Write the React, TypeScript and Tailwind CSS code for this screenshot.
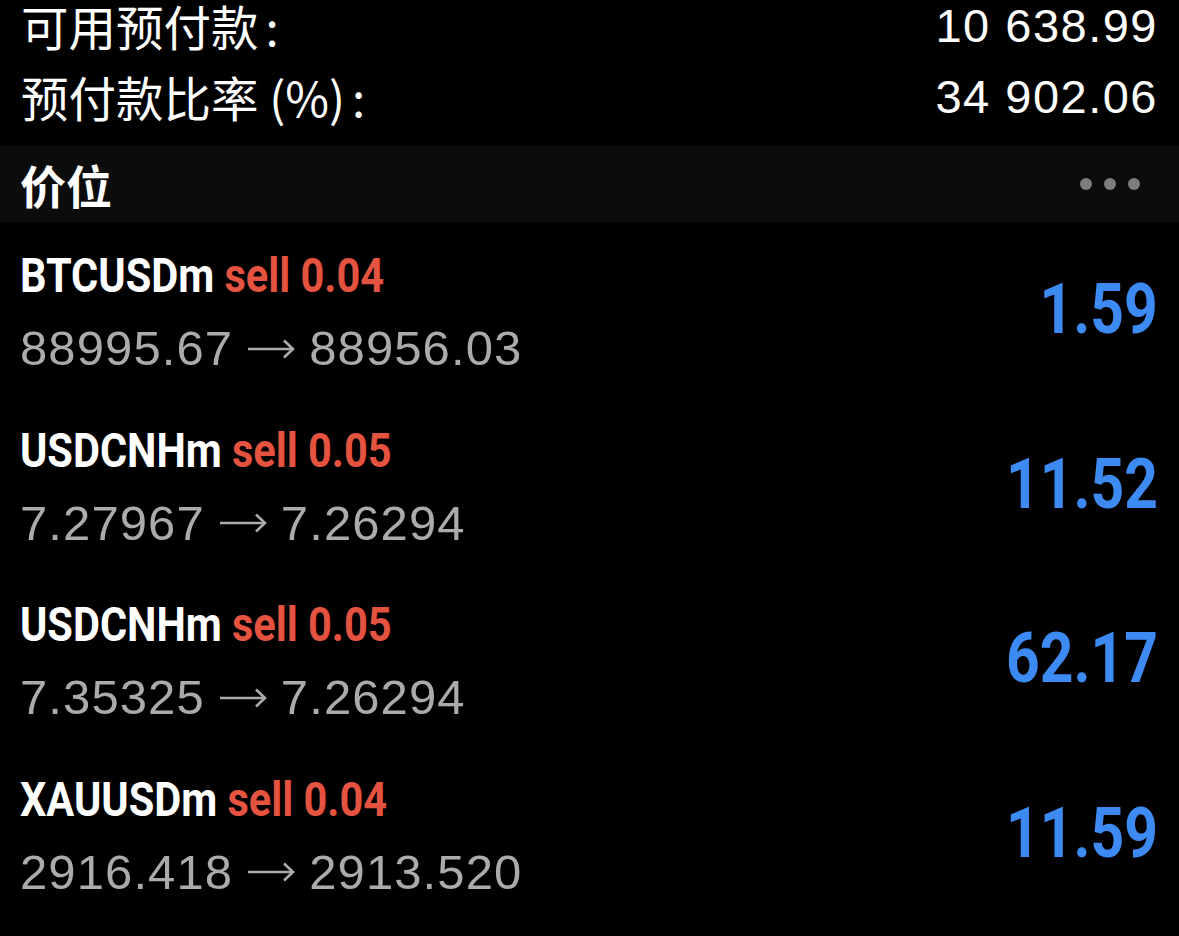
import React from 'react';

const cond = 'Roboto, "DejaVu Sans Condensed", sans-serif';
const helv = '"Liberation Sans", Arial, sans-serif';
const cjk = '"Noto Sans CJK SC", "Noto Sans", sans-serif';

const positions = [
  { symbol: 'BTCUSDm', side: 'sell', lots: '0.04', open: '88995.67', current: '88956.03', profit: '1.59' },
  { symbol: 'USDCNHm', side: 'sell', lots: '0.05', open: '7.27967', current: '7.26294', profit: '11.52' },
  { symbol: 'USDCNHm', side: 'sell', lots: '0.05', open: '7.35325', current: '7.26294', profit: '62.17' },
  { symbol: 'XAUUSDm', side: 'sell', lots: '0.04', open: '2916.418', current: '2913.520', profit: '11.59' },
];

const Arrow = () => (
  <svg width="48" height="22" viewBox="0 0 48 22" className="mx-[14px] shrink-0">
    <path d="M1 11H46" stroke="#ababab" strokeWidth="2.6" fill="none" />
    <path d="M37 2.5L46 11L37 19.5" stroke="#ababab" strokeWidth="2.6" fill="none" strokeLinejoin="miter" />
  </svg>
);

const App = () => {
  return (
    <div className="w-[1179px] h-[936px] bg-black text-white overflow-hidden">
      {/* 账户摘要 */}
      <div className="h-[146px] pl-[21px] pr-[21px]">
        <div className="h-[52px] flex items-center justify-between">
          <span className="text-[47.5px] leading-[52px]" style={{ fontFamily: cjk }}>
            可用预付款<span className="ml-[7px]">:</span>
          </span>
          <span className="text-[47px] leading-[52px] tracking-[1.5px]" style={{ fontFamily: helv }}>10 638.99</span>
        </div>
        <div className="h-[90px] flex items-center justify-between">
          <span className="text-[47.5px] leading-[70px]" style={{ fontFamily: cjk }}>
            预付款比率 (%)<span className="ml-[7px]">:</span>
          </span>
          <span className="text-[47px] leading-[70px] tracking-[1.5px]" style={{ fontFamily: helv }}>34 902.06</span>
        </div>
      </div>

      {/* 价位 标题 */}
      <div className="h-[76px] bg-[#0c0c0c] flex items-center justify-between pl-[20px] pr-[39px]">
        <span className="text-[46px] font-bold leading-[60px]" style={{ fontFamily: cjk }}>价位</span>
        <div className="flex items-center gap-[12px]">
          <span className="w-[12px] h-[12px] rounded-full bg-[#7d7d7d]" />
          <span className="w-[12px] h-[12px] rounded-full bg-[#7d7d7d]" />
          <span className="w-[12px] h-[12px] rounded-full bg-[#7d7d7d]" />
        </div>
      </div>

      {/* 持仓列表 */}
      <div>
        {positions.map((p, i) => (
          <div key={i} className="h-[174.5px] flex items-center justify-between pl-[20px] pr-[21px]">
            <div className="flex flex-col pt-[6px]">
              <div className="h-[73px] flex items-center">
                <span
                  className="inline-block origin-left scale-x-[0.865] whitespace-nowrap text-[48px] font-bold leading-[73px]"
                  style={{ fontFamily: cond }}
                >
                  <span className="text-white">{p.symbol}</span>{' '}
                  <span className="text-[#e4533f]">{p.side} {p.lots}</span>
                </span>
              </div>
              <div className="h-[73px] flex items-center text-[49px] leading-[73px] text-[#ababab] tracking-[1.1px]" style={{ fontFamily: helv }}>
                <span>{p.open}</span>
                <Arrow />
                <span>{p.current}</span>
              </div>
            </div>
            <span
              className="inline-block origin-right scale-x-[0.84] text-[70px] font-bold leading-[80px] text-[#3d8af2]"
              style={{ fontFamily: cond }}
            >
              {p.profit}
            </span>
          </div>
        ))}
      </div>
    </div>
  );
};

export default App;
